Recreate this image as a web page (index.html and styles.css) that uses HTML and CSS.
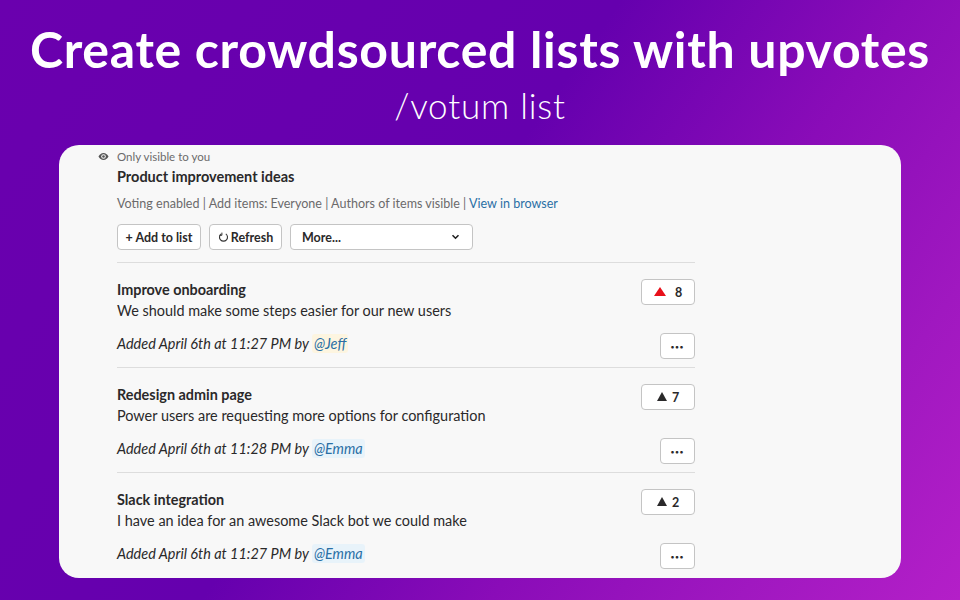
FILE: index.html
```html
<!DOCTYPE html>

<html>
    <head>
        <title>Votum list</title>
        <link rel="stylesheet" href="styles.css">
    </head>
    <body>
        <h1 class="headline">Create crowdsourced lists with upvotes</h1>
        <p class="command">/votum list</p>

        <div class="card">
            <div class="visible-note">
                <svg class="eye" width="11" height="9" viewBox="0 0 11 9">
                    <path d="M0.5 4.5C1.7 2.2 3.4 1 5.5 1s3.8 1.2 5 3.5C9.3 6.8 7.6 8 5.5 8s-3.8-1.2-5-3.5z" fill="#555"/>
                    <circle cx="5.5" cy="4.5" r="2.3" fill="#f8f8f8"/>
                    <circle cx="5.5" cy="4.5" r="1.3" fill="#555"/>
                </svg>
                <span>Only visible to you</span>
            </div>
            <div class="content">
                <div class="list-title">Product improvement ideas</div>
                <div class="list-info">Voting enabled | Add items: Everyone | Authors of items visible | <a class="link">View in browser</a></div>
                <div class="actions">
                    <button class="btn btn-add">+ Add to list</button>
                    <button class="btn btn-refresh">
                        <svg width="11" height="11" viewBox="0 0 11 11">
                            <path d="M3.2 1.9A4 4 0 1 0 7.8 1.9" fill="none" stroke="#333" stroke-width="1.1"/>
                            <path d="M3.9 0.6V3.3H1.4" fill="none" stroke="#333" stroke-width="1"/>
                        </svg>
                        Refresh
                    </button>
                    <button class="btn btn-select">
                        More...
                        <svg width="9" height="6" viewBox="0 0 9 6">
                            <path d="M1.5 1.2L4.5 4.2L7.5 1.2" fill="none" stroke="#222" stroke-width="1.6"/>
                        </svg>
                    </button>
                </div>

                <div class="item">
                    <div class="item-top">
                        <div>
                            <div class="item-title">Improve onboarding</div>
                            <div class="item-text">We should make some steps easier for our new users</div>
                        </div>
                        <button class="btn btn-vote"><span class="arrow arrow-red"></span><span class="count-wide">8</span></button>
                    </div>
                    <div class="item-bottom">
                        <div class="meta">Added April 6th at 11:27 PM by <span class="mention mention-me">@Jeff</span></div>
                        <button class="btn btn-dots">•••</button>
                    </div>
                </div>

                <div class="item">
                    <div class="item-top">
                        <div>
                            <div class="item-title">Redesign admin page</div>
                            <div class="item-text">Power users are requesting more options for configuration</div>
                        </div>
                        <button class="btn btn-vote"><span class="arrow"></span><span>7</span></button>
                    </div>
                    <div class="item-bottom">
                        <div class="meta">Added April 6th at 11:28 PM by <span class="mention">@Emma</span></div>
                        <button class="btn btn-dots">•••</button>
                    </div>
                </div>

                <div class="item">
                    <div class="item-top">
                        <div>
                            <div class="item-title">Slack integration</div>
                            <div class="item-text">I have an idea for an awesome Slack bot we could make</div>
                        </div>
                        <button class="btn btn-vote"><span class="arrow"></span><span>2</span></button>
                    </div>
                    <div class="item-bottom">
                        <div class="meta">Added April 6th at 11:27 PM by <span class="mention">@Emma</span></div>
                        <button class="btn btn-dots">•••</button>
                    </div>
                </div>
            </div>
        </div>
    </body>
</html>
```

FILE: styles.css
```css
body {
    margin: 0;
    height: 600px;
    overflow: hidden;
    background: linear-gradient(125deg, #6a00ae 0%, #6500ae 45%, #8a0cb8 66%, #a018c0 84%, #b41fc8 100%);
    font-family: "Lato", sans-serif;
    color: #2a292a;
}
.headline {
    margin: 0;
    padding-top: 20px;
    font-size: 50px;
    line-height: 58px;
    font-weight: 700;
    letter-spacing: 0.7px;
    text-align: center;
    color: white;
    white-space: nowrap;
}
.command {
    margin: 0;
    padding-top: 6px;
    font-size: 35px;
    line-height: 42px;
    font-weight: 300;
    letter-spacing: 0.8px;
    text-align: center;
    color: white;
}
.card {
    box-sizing: border-box;
    width: 842px;
    height: 433px;
    margin: 19px 0 0 59px;
    padding-left: 39px;
    background-color: #f8f8f8;
    border-radius: 20px;
    overflow: hidden;
}
.visible-note {
    display: flex;
    align-items: center;
    gap: 8px;
    height: 22px;
    font-size: 11.5px;
    color: #6b6a6b;
}
.eye {
    flex-shrink: 0;
}
.content {
    width: 578px;
    margin-left: 19px;
}
.list-title {
    font-size: 14.5px;
    line-height: 20px;
    font-weight: 700;
}
.list-info {
    margin-top: 8px;
    font-size: 12.55px;
    line-height: 18px;
    color: #6b6a6b;
}
.link {
    color: #2a6fa5;
}
.actions {
    display: flex;
    gap: 8px;
    margin-top: 11px;
    padding-bottom: 12px;
    border-bottom: 1px solid #dddddd;
}
.btn {
    box-sizing: border-box;
    height: 26px;
    padding: 0;
    background-color: white;
    border: 1px solid #c4c4c4;
    border-radius: 4px;
    font-family: "Lato", sans-serif;
    font-size: 12.5px;
    font-weight: 700;
    color: #2a292a;
}
.btn-add {
    width: 84px;
}
.btn-refresh {
    display: flex;
    align-items: center;
    justify-content: center;
    gap: 2px;
    width: 73px;
}
.btn-select {
    display: flex;
    align-items: center;
    justify-content: space-between;
    width: 183px;
    padding: 0 12px 0 11px;
}
.item {
    height: 104px;
    border-bottom: 1px solid #dddddd;
}
.item:last-child {
    border-bottom: none;
}
.item-top {
    display: flex;
    justify-content: space-between;
    align-items: flex-start;
    padding-top: 16px;
}
.item-title {
    font-size: 14.4px;
    line-height: 22px;
    font-weight: 700;
}
.item-text {
    font-size: 14.45px;
    line-height: 20px;
}
.item-bottom {
    display: flex;
    justify-content: space-between;
    align-items: flex-start;
    margin-top: 12px;
}
.meta {
    font-size: 14.45px;
    line-height: 22px;
    font-style: italic;
}
.mention {
    padding: 1px 2px;
    color: #2a6fa5;
    background-color: #e8f3fa;
    border-radius: 3px;
}
.mention-me {
    background-color: #fdf5e0;
}
.btn-vote {
    display: flex;
    align-items: center;
    justify-content: center;
    gap: 5px;
    width: 54px;
}
.count-wide {
    margin-left: 4px;
}
.arrow {
    width: 0;
    height: 0;
    margin-top: -1px;
    border-left: 5px solid transparent;
    border-right: 5px solid transparent;
    border-bottom: 9px solid #2a292a;
}
.arrow-red {
    border-left-width: 6px;
    border-right-width: 6px;
    border-bottom-color: #e8101a;
}
.btn-dots {
    width: 35px;
    font-size: 6px;
    letter-spacing: 1px;
}
```
